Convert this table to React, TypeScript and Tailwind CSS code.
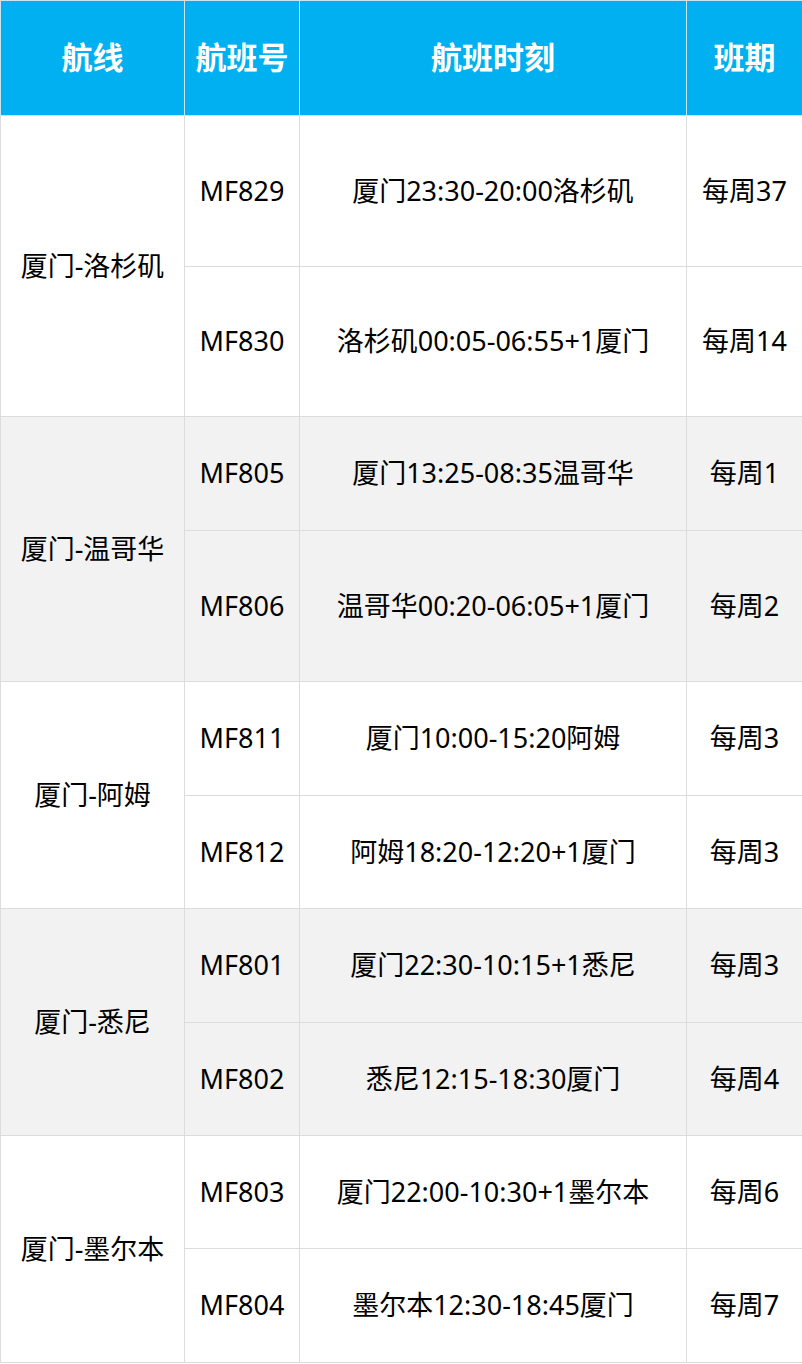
import React from "react";

type Row = { no: string; time: string; sched: string; h: number };
type Group = { route: string; rows: Row[]; bg: string };

const groups: Group[] = [
  {
    route: "厦门-洛杉矶",
    bg: "bg-white",
    rows: [
      { no: "MF829", time: "厦门23:30-20:00洛杉矶", sched: "每周37", h: 151 },
      { no: "MF830", time: "洛杉矶00:05-06:55+1厦门", sched: "每周14", h: 150 },
    ],
  },
  {
    route: "厦门-温哥华",
    bg: "bg-[#f2f2f2]",
    rows: [
      { no: "MF805", time: "厦门13:25-08:35温哥华", sched: "每周1", h: 114 },
      { no: "MF806", time: "温哥华00:20-06:05+1厦门", sched: "每周2", h: 151 },
    ],
  },
  {
    route: "厦门-阿姆",
    bg: "bg-white",
    rows: [
      { no: "MF811", time: "厦门10:00-15:20阿姆", sched: "每周3", h: 114 },
      { no: "MF812", time: "阿姆18:20-12:20+1厦门", sched: "每周3", h: 113 },
    ],
  },
  {
    route: "厦门-悉尼",
    bg: "bg-[#f2f2f2]",
    rows: [
      { no: "MF801", time: "厦门22:30-10:15+1悉尼", sched: "每周3", h: 114 },
      { no: "MF802", time: "悉尼12:15-18:30厦门", sched: "每周4", h: 113 },
    ],
  },
  {
    route: "厦门-墨尔本",
    bg: "bg-white",
    rows: [
      { no: "MF803", time: "厦门22:00-10:30+1墨尔本", sched: "每周6", h: 113 },
      { no: "MF804", time: "墨尔本12:30-18:45厦门", sched: "每周7", h: 114 },
    ],
  },
];

const cell = "border border-[#dcdcdc] text-center align-middle p-0";

export default function App() {
  return (
    <div
      className="w-[802px] bg-white"
      style={{ fontFamily: '"Noto Sans", "Noto Sans CJK SC", sans-serif' }}
    >
      <table className="w-[802px] table-fixed border-collapse">
        <colgroup>
          <col className="w-[184px]" />
          <col className="w-[115px]" />
          <col className="w-[387px]" />
          <col className="w-[116px]" />
        </colgroup>
        <thead>
          <tr className="h-[115px] bg-[#00b0f0]">
            {["航线", "航班号", "航班时刻", "班期"].map((t) => (
              <th
                key={t}
                className="border border-[#c9e3ef] text-center align-middle p-0 pb-[3px] text-[31px] font-bold text-white"
                style={{ fontFamily: '"Noto Sans CJK SC", sans-serif' }}
              >
                {t}
              </th>
            ))}
          </tr>
        </thead>
        <tbody className="text-[27px] text-black">
          {groups.map((g) =>
            g.rows.map((r, i) => (
              <tr key={r.no} className={g.bg} style={{ height: r.h }}>
                {i === 0 && (
                  <td rowSpan={2} className={cell}>
                    {g.route}
                  </td>
                )}
                <td className={cell}>{r.no}</td>
                <td className={cell}>{r.time}</td>
                <td className={cell}>{r.sched}</td>
              </tr>
            ))
          )}
        </tbody>
      </table>
    </div>
  );
}
